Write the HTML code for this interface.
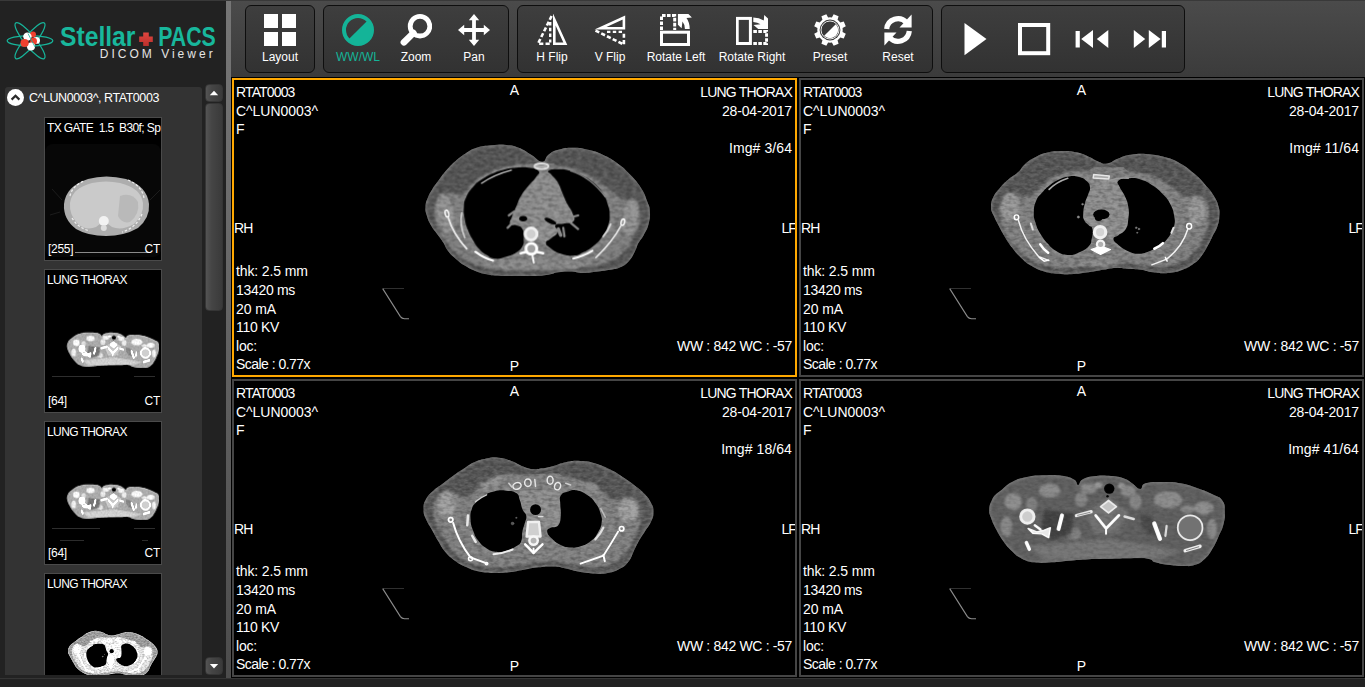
<!DOCTYPE html>
<html lang="en">
<head>
<meta charset="utf-8">
<title>Stellar PACS DICOM Viewer</title>
<style>
*{box-sizing:border-box;margin:0;padding:0}
html,body{width:1365px;height:687px;overflow:hidden;background:#242424}
body{position:relative;font-family:"Liberation Sans",sans-serif;color:#fff}
.abs{position:absolute}
/* sidebar */
#side{left:0;top:0;width:226px;height:678px;background:#222}
#split{left:226px;top:0;width:5px;height:678px;background:linear-gradient(180deg,#767676,#6c6c6c 30%,#4c4c4c)}
#spanel{left:5px;top:87px;width:197px;height:588px;background:#333;border-radius:3px 3px 0 0}
#shead{left:29px;top:90px;font-size:12.5px;line-height:17px;white-space:nowrap;letter-spacing:-0.45px;color:#fff}
.thumb{left:44px;width:118px;height:144px;background:#000;border:1px solid #4a4a4a;overflow:hidden}
.thumb .tt{position:absolute;left:2px;top:3px;font-size:12px;line-height:15px;white-space:pre;letter-spacing:-0.6px}
.thumb .tn{position:absolute;left:3px;bottom:3px;font-size:12px;line-height:15px;letter-spacing:-0.3px}
.thumb .tm{position:absolute;right:1px;bottom:3px;font-size:12px;line-height:15px;letter-spacing:-0.3px}
.sbtn{left:205px;width:18px;border:1px solid #353535;border-radius:4px;background:linear-gradient(90deg,#545454,#454545 35%,#3a3a3a)}
/* toolbar */
#tbar{left:231px;top:0;width:1134px;height:77px;background:linear-gradient(180deg,#4b4b4b 0,#4a4a4a 4px,#3b3b3b 100%)}
#topline{left:0;top:0;width:1365px;height:1px;background:#393939}
.grp{top:5px;height:68px;border:1px solid #0e0e0e;border-radius:6px;background:linear-gradient(180deg,#3e3e3e,#323232)}
.lbl{top:50px;font-size:12px;line-height:14px;white-space:nowrap;text-align:center;color:#fff;transform:translateX(-50%)}
.ico{top:14px;width:32px;height:32px}
/* viewports */
#grid{left:231px;top:77px;width:1134px;height:601px;background:#000}
.vp{background:#000;border:2px solid #454545;overflow:hidden}
.vp.sel{border-color:#ffa800}
.vp .t{position:absolute;font-size:14px;line-height:18.6px;white-space:nowrap;color:#fff}
#bot{left:0;top:678px;width:1365px;height:9px;background:#222;border-top:1px solid #343434}
</style>
</head>
<body>
<!-- SIDEBAR -->
<div id="side" class="abs"></div>
<div id="spanel" class="abs"></div>
<div id="shead" class="abs">C^LUN0003^, RTAT0003</div>
<svg class="abs" style="left:7px;top:89px" width="17" height="17" viewBox="0 0 17 17"><circle cx="8.5" cy="8.5" r="8.5" fill="#fff"/><path d="M4.6 10.6 L8.5 6.7 L12.4 10.6" fill="none" stroke="#2a2a2a" stroke-width="2.2"/></svg>

<!-- THUMBS -->
<div class="abs thumb" style="top:117px"><svg class="abs" style="left:0;top:0" width="116" height="142" viewBox="45 118 116 142">
<rect x="45" y="144" width="116" height="113" rx="8" fill="#070707"/>
<g filter="url(#tb)">
<path d="M64 204 Q66 186 88 179 Q106 174 126 179 Q147 186 149 204 Q150 218 138 228 Q124 236 106 236 Q88 236 76 229 Q63 219 64 204Z" fill="#adadad"/>
<path d="M70 203 Q72 188 92 183 Q106 180 120 183 Q141 188 143 203 Q144 215 134 224 Q122 231 112 227 L104 221 L96 227 Q86 231 78 224 Q69 215 70 203Z" fill="#cacaca"/>
<path d="M120 196 Q132 192 138 202 Q140 214 130 222 Q122 224 118 216Z" fill="#b9b9b9"/>
<circle cx="103.8" cy="221" r="5" fill="#f2f2f2"/>
<circle cx="103.8" cy="228" r="3" fill="#ddd"/>
<path d="M70 196 Q72 186 84 181 M128 180 Q142 186 144 198 M72 218 Q78 228 90 231 M142 214 Q136 228 122 232" stroke="#eee" stroke-width="1.3" fill="none" stroke-dasharray="2.5 2"/>
</g>
<path d="M52 189 L62 200 M150 200 L160 190 M50 215 L60 212" stroke="#1c1c1c" stroke-width="1"/>
<path d="M75 252.5 H148" stroke="#8a8a8a" stroke-width="1"/>
</svg><span class="tt">TX GATE  1.5  B30f; Sp</span><span class="tn">[255]</span><span class="tm">CT</span></div>
<div class="abs thumb" style="top:269px"><svg class="abs" style="left:0;top:0" width="116" height="142" viewBox="45 270 116 142">
<use href="#ct4g" transform="translate(59.5 314.8) scale(0.0966)" filter="url(#br)"/>
<path d="M52 376.5 H100 M134 376.5 H155" stroke="#2e2e2e" stroke-width="1"/>
</svg><span class="tt">LUNG THORAX</span><span class="tn">[64]</span><span class="tm">CT</span></div>
<div class="abs thumb" style="top:421px"><svg class="abs" style="left:0;top:0" width="116" height="142" viewBox="45 422 116 142">
<use href="#ct4g" transform="translate(59.5 466.8) scale(0.0966)" filter="url(#br)"/>
<path d="M52 528.5 H100 M134 528.5 H155" stroke="#2e2e2e" stroke-width="1"/><path d="M60 540.5 H84 M142 540.5 H148" stroke="#2c2c2c" stroke-width="1"/>
</svg><span class="tt">LUNG THORAX</span><span class="tn">[64]</span><span class="tm">CT</span></div>
<div class="abs thumb" style="top:573px;height:102px;border-bottom:0"><svg class="abs" style="left:0;top:0" width="116" height="102" viewBox="45 574 116 102">
<use href="#ct3g" transform="translate(58.9 620.2) scale(0.0963)" filter="url(#br)"/>
</svg><span class="tt">LUNG THORAX</span></div>
<!-- /THUMBS -->

<div class="abs sbtn" style="top:84px;height:18px"></div>
<div class="abs sbtn" style="top:103px;height:208px"></div>
<div class="abs sbtn" style="top:657px;height:18px"></div>
<svg class="abs" style="left:205px;top:84px" width="18" height="18"><path d="M4.8 11.3 L9 6.8 L13.2 11.3Z" fill="#fff"/></svg>
<svg class="abs" style="left:205px;top:657px" width="18" height="18"><path d="M4.8 7 L13.2 7 L9 11.5Z" fill="#fff"/></svg>

<!-- LOGO -->
<svg class="abs" style="left:0;top:10px" width="226" height="60" viewBox="0 10 226 60">
<defs><linearGradient id="rc" x1="0" y1="0" x2="0" y2="1"><stop offset="0" stop-color="#e2463f"/><stop offset="1" stop-color="#b8302d"/></linearGradient></defs>
<g fill="none" stroke="#17b49a" stroke-width="1.25">
<ellipse cx="30" cy="40.8" rx="22.8" ry="5.2"/>
<ellipse cx="30" cy="40.8" rx="22.8" ry="5.6" transform="rotate(51 30 40.8)"/>
<ellipse cx="30" cy="40.8" rx="22.8" ry="5.6" transform="rotate(-51 30 40.8)"/>
</g>
<circle cx="33" cy="34.6" r="3" fill="#f0402f"/>
<circle cx="27.4" cy="36.6" r="4.2" fill="#fff"/>
<circle cx="36.6" cy="40.4" r="3.4" fill="#fff"/>
<circle cx="33.6" cy="41.2" r="3.4" fill="#f0402f"/>
<circle cx="31" cy="46.4" r="4" fill="#fff"/>
<circle cx="24.6" cy="43" r="4.1" fill="#f0402f"/>
<path d="M28 33.5 L35 47" stroke="#17b49a" stroke-width="0.8" fill="none"/>
<text x="60" y="46.3" font-family="Liberation Sans, sans-serif" font-weight="bold" font-size="27" fill="#18b79c" textLength="75.4" lengthAdjust="spacingAndGlyphs">Stellar</text>
<text x="158.2" y="46.3" font-family="Liberation Sans, sans-serif" font-weight="bold" font-size="27" fill="#18b79c" textLength="57.6" lengthAdjust="spacingAndGlyphs">PACS</text>
<path d="M143.2 32.4 h5.6 v4 h4 v5.6 h-4 v4 h-5.6 v-4 h-4 v-5.6 h4z" fill="url(#rc)"/>
<text x="99.7" y="58.4" font-family="Liberation Sans, sans-serif" font-size="12" fill="#e4e4e4" textLength="113" lengthAdjust="spacing">DICOM Viewer</text>
</svg>
<div id="split" class="abs"></div>

<!-- TOOLBAR -->
<div id="tbar" class="abs"></div>
<div id="topline" class="abs"></div>
<div class="abs grp" style="left:245px;width:70px"></div>
<div class="abs grp" style="left:323px;width:186px"></div>
<div class="abs grp" style="left:517px;width:416px"></div>
<div class="abs grp" style="left:941px;width:244px"></div>

<div class="abs lbl" style="left:280px">Layout</div>
<div class="abs lbl" style="left:358px;color:#14b498">WW/WL</div>
<div class="abs lbl" style="left:416px">Zoom</div>
<div class="abs lbl" style="left:474px">Pan</div>
<div class="abs lbl" style="left:552px">H Flip</div>
<div class="abs lbl" style="left:610px">V Flip</div>
<div class="abs lbl" style="left:676px">Rotate Left</div>
<div class="abs lbl" style="left:752px">Rotate Right</div>
<div class="abs lbl" style="left:830px">Preset</div>
<div class="abs lbl" style="left:898px">Reset</div>

<!-- ICONS -->
<svg class="abs ico" style="left:264px" viewBox="0 0 32 32"><path d="M0 0h14v14H0zM18 0h14v14H18zM0 18h14v14H0zM18 18h14v14H18z" fill="#fff"/></svg>
<svg class="abs ico" style="left:342px" viewBox="0 0 32 32"><circle cx="16" cy="16" r="14" fill="none" stroke="#14b498" stroke-width="4"/><path d="M26.6 5.4 A15 15 0 0 1 5.4 26.6Z" fill="#14b498"/></svg>
<svg class="abs ico" style="left:400px" viewBox="0 0 32 32"><circle cx="20" cy="12.2" r="9.8" fill="none" stroke="#fff" stroke-width="4.8"/><path d="M13.4 19 L3.9 28.3" stroke="#fff" stroke-width="6.6" stroke-linecap="round"/></svg>
<svg class="abs ico" style="left:458px" viewBox="0 0 32 32"><path d="M16 0 L21.2 6.2 H17.9 V14.1 H25.8 V10.8 L32 16 L25.8 21.2 V17.9 H17.9 V25.8 H21.2 L16 32 L10.8 25.8 H14.1 V17.9 H6.2 V21.2 L0 16 L6.2 10.8 V14.1 H14.1 V6.2 H10.8Z" fill="#fff"/></svg>
<svg class="abs ico" style="left:536px" viewBox="0 0 32 32" fill="none" stroke="#fff"><path d="M18.3 5.5 V29.7 H29.3Z" stroke-width="2.6" stroke-miterlimit="12"/><path d="M15.6 2 L2 29.7 H15" stroke-width="2.6" stroke-dasharray="4.2 2.2"/><path d="M14.2 8 V28.4" stroke-width="2.4" stroke-dasharray="3.4 2.4"/></svg>
<svg class="abs ico" style="left:594px" viewBox="0 0 32 32" fill="none" stroke="#fff"><path d="M6.5 14.2 L29.9 3.6 V14.2Z" stroke-width="2.6" stroke-miterlimit="12"/><path d="M1.5 16.6 L29.9 30.6 V18" stroke-width="2.6" stroke-dasharray="4.2 2.2"/><path d="M13 17.8 H29" stroke-width="2.2" stroke-dasharray="3.4 2.4"/></svg>
<svg class="abs ico" style="left:660px" viewBox="0 0 32 32" fill="none" stroke="#fff"><rect x="1.5" y="18.2" width="27" height="12.3" stroke-width="3"/><path d="M1.5 16 V1.5 H14.7 V16" stroke-width="3" stroke-dasharray="3.6 1.4"/><path d="M17.9 0 L28.4 0 L31.9 3.5 L26.5 4 Q29.7 8.5 29.7 14.9 L24.9 14.9 Q24.9 10.5 22.5 7.5 L21.6 14.2 L17.9 10.7Z" fill="#fff" stroke="none"/></svg>
<svg class="abs ico" style="left:736px" viewBox="0 0 32 32" fill="none" stroke="#fff"><rect x="1.2" y="4.4" width="13.2" height="25.1" stroke-width="3"/><path d="M17.3 17.5 H30.6 V29.5 H17.3" stroke-width="3" stroke-dasharray="3.6 1.4"/><path d="M32 14.9 L32 4.4 L28.2 1.1 L27.8 6.5 Q23 3.5 17.3 3.5 L17.3 8.1 Q21.5 8.3 24.5 10.3 L17.5 11 L22.2 14.9Z" fill="#fff" stroke="none"/></svg>
<svg class="abs ico" style="left:814px" viewBox="0 0 32 32"><path d="M17.89 3.44 L19.66 0.22 L24.57 2.25 L23.55 5.78 A12.7 12.7 0 0 1 26.22 8.45 L29.75 7.43 L31.78 12.34 L28.56 14.11 A12.7 12.7 0 0 1 28.56 17.89 L31.78 19.66 L29.75 24.57 L26.22 23.55 A12.7 12.7 0 0 1 23.55 26.22 L24.57 29.75 L19.66 31.78 L17.89 28.56 A12.7 12.7 0 0 1 14.11 28.56 L12.34 31.78 L7.43 29.75 L8.45 26.22 A12.7 12.7 0 0 1 5.78 23.55 L2.25 24.57 L0.22 19.66 L3.44 17.89 A12.7 12.7 0 0 1 3.44 14.11 L0.22 12.34 L2.25 7.43 L5.78 8.45 A12.7 12.7 0 0 1 8.45 5.78 L7.43 2.25 L12.34 0.22 L14.11 3.44 A12.7 12.7 0 0 1 17.89 3.44Z" fill="#fff"/><circle cx="16" cy="16" r="10.4" fill="#373737"/><circle cx="16" cy="16" r="9" fill="none" stroke="#fff" stroke-width="0.9"/><path d="M21.8 10.2 A8.2 8.2 0 0 1 10.2 21.8Z" fill="#fff"/></svg>
<svg class="abs ico" style="left:884px;width:28px" viewBox="0 0 28 32" fill="none" stroke="#fff"><path d="M2.7 15 A11.3 11.3 0 0 1 22.5 8.6" stroke-width="5.2"/><path d="M15.5 13.6 L27.6 13.6 L27.6 0.5Z" fill="#fff" stroke="none"/><path d="M25.3 17 A11.3 11.3 0 0 1 5.5 23.4" stroke-width="5.2"/><path d="M12.5 18.4 L0.4 18.4 L0.4 31.5Z" fill="#fff" stroke="none"/></svg>
<svg class="abs" style="left:941px;top:5px" width="244" height="68" viewBox="941 5 244 68" fill="#fff"><path d="M964.5 23 V55.2 L986.5 39Z"/><rect x="1020" y="25" width="28.2" height="28.2" fill="none" stroke="#fff" stroke-width="4"/><path d="M1075.6 31 h4.2 v16.6 h-4.2z M1093 30 V48 L1081.2 39Z M1108.3 30 V48 L1096.8 39Z"/><path d="M1133.8 30 V48 L1145.2 39Z M1148.8 30 V48 L1160.6 39Z M1161.8 31 h4.2 v16.6 h-4.2z"/></svg>

<!-- VIEWPORTS -->
<div id="grid" class="abs"></div>
<div class="abs vp sel" style="left:232px;top:78px;width:565px;height:299px" id="vp1">
<div class="t" style="left:2px;top:3px"><div style="letter-spacing:-0.86px">RTAT0003</div><div style="letter-spacing:-0.04px">C^LUN0003^</div><div>F</div></div>
<div class="t" style="left:0;width:100%;top:1px;text-align:center">A</div>
<div class="t" style="right:3px;top:3px;text-align:right"><div style="letter-spacing:-0.84px">LUNG THORAX</div><div style="letter-spacing:-0.16px">28-04-2017</div><div>&nbsp;</div><div style="letter-spacing:0.08px">Img# 3/64</div></div>
<div class="t" style="left:0;top:139px;letter-spacing:-0.9px">RH</div>
<div class="t" style="right:0;top:139px;letter-spacing:-0.9px;margin-right:-1px">LF</div>
<div class="t" style="left:2px;bottom:1px"><div style="letter-spacing:-0.13px">thk: 2.5 mm</div><div style="letter-spacing:-0.31px">13420 ms</div><div style="letter-spacing:-0.09px">20 mA</div><div style="letter-spacing:-0.32px">110 KV</div><div style="letter-spacing:-0.20px">loc:</div><div style="letter-spacing:-0.53px">Scale : 0.77x</div></div>
<div class="t" style="right:3px;bottom:1px;text-align:right"><div style="letter-spacing:-0.33px">WW : 842 WC : -57</div><div>&nbsp;</div></div>
<div class="t" style="left:0;width:100%;bottom:-1px;text-align:center">P</div>
<svg class="abs" style="left:146px;top:206px" width="40" height="40" viewBox="0 0 40 40" fill="none"><path d="M2.7 2.5 H24" stroke="#303030" stroke-width="1"/><path d="M2.7 2.6 L20.4 30.6 Q21.8 32.6 24.5 32.7 H29" stroke="#8c8c8c" stroke-width="1.1"/></svg>
</div>
<div class="abs vp" style="left:799px;top:78px;width:565px;height:299px" id="vp2">
<div class="t" style="left:2px;top:3px"><div style="letter-spacing:-0.86px">RTAT0003</div><div style="letter-spacing:-0.04px">C^LUN0003^</div><div>F</div></div>
<div class="t" style="left:0;width:100%;top:1px;text-align:center">A</div>
<div class="t" style="right:3px;top:3px;text-align:right"><div style="letter-spacing:-0.84px">LUNG THORAX</div><div style="letter-spacing:-0.16px">28-04-2017</div><div>&nbsp;</div><div style="letter-spacing:0.08px">Img# 11/64</div></div>
<div class="t" style="left:0;top:139px;letter-spacing:-0.9px">RH</div>
<div class="t" style="right:0;top:139px;letter-spacing:-0.9px;margin-right:-1px">LF</div>
<div class="t" style="left:2px;bottom:1px"><div style="letter-spacing:-0.13px">thk: 2.5 mm</div><div style="letter-spacing:-0.31px">13420 ms</div><div style="letter-spacing:-0.09px">20 mA</div><div style="letter-spacing:-0.32px">110 KV</div><div style="letter-spacing:-0.20px">loc:</div><div style="letter-spacing:-0.53px">Scale : 0.77x</div></div>
<div class="t" style="right:3px;bottom:1px;text-align:right"><div style="letter-spacing:-0.33px">WW : 842 WC : -57</div><div>&nbsp;</div></div>
<div class="t" style="left:0;width:100%;bottom:-1px;text-align:center">P</div>
<svg class="abs" style="left:146px;top:206px" width="40" height="40" viewBox="0 0 40 40" fill="none"><path d="M2.7 2.5 H24" stroke="#303030" stroke-width="1"/><path d="M2.7 2.6 L20.4 30.6 Q21.8 32.6 24.5 32.7 H29" stroke="#8c8c8c" stroke-width="1.1"/></svg>
</div>
<div class="abs vp" style="left:232px;top:379px;width:565px;height:298px" id="vp3">
<div class="t" style="left:2px;top:3px"><div style="letter-spacing:-0.86px">RTAT0003</div><div style="letter-spacing:-0.04px">C^LUN0003^</div><div>F</div></div>
<div class="t" style="left:0;width:100%;top:1px;text-align:center">A</div>
<div class="t" style="right:3px;top:3px;text-align:right"><div style="letter-spacing:-0.84px">LUNG THORAX</div><div style="letter-spacing:-0.16px">28-04-2017</div><div>&nbsp;</div><div style="letter-spacing:0.08px">Img# 18/64</div></div>
<div class="t" style="left:0;top:139px;letter-spacing:-0.9px">RH</div>
<div class="t" style="right:0;top:139px;letter-spacing:-0.9px;margin-right:-1px">LF</div>
<div class="t" style="left:2px;bottom:1px"><div style="letter-spacing:-0.13px">thk: 2.5 mm</div><div style="letter-spacing:-0.31px">13420 ms</div><div style="letter-spacing:-0.09px">20 mA</div><div style="letter-spacing:-0.32px">110 KV</div><div style="letter-spacing:-0.20px">loc:</div><div style="letter-spacing:-0.53px">Scale : 0.77x</div></div>
<div class="t" style="right:3px;bottom:1px;text-align:right"><div style="letter-spacing:-0.33px">WW : 842 WC : -57</div><div>&nbsp;</div></div>
<div class="t" style="left:0;width:100%;bottom:-1px;text-align:center">P</div>
<svg class="abs" style="left:146px;top:205px" width="40" height="40" viewBox="0 0 40 40" fill="none"><path d="M2.7 2.5 H24" stroke="#303030" stroke-width="1"/><path d="M2.7 2.6 L20.4 30.6 Q21.8 32.6 24.5 32.7 H29" stroke="#8c8c8c" stroke-width="1.1"/></svg>
</div>
<div class="abs vp" style="left:799px;top:379px;width:565px;height:298px" id="vp4">
<div class="t" style="left:2px;top:3px"><div style="letter-spacing:-0.86px">RTAT0003</div><div style="letter-spacing:-0.04px">C^LUN0003^</div><div>F</div></div>
<div class="t" style="left:0;width:100%;top:1px;text-align:center">A</div>
<div class="t" style="right:3px;top:3px;text-align:right"><div style="letter-spacing:-0.84px">LUNG THORAX</div><div style="letter-spacing:-0.16px">28-04-2017</div><div>&nbsp;</div><div style="letter-spacing:0.08px">Img# 41/64</div></div>
<div class="t" style="left:0;top:139px;letter-spacing:-0.9px">RH</div>
<div class="t" style="right:0;top:139px;letter-spacing:-0.9px;margin-right:-1px">LF</div>
<div class="t" style="left:2px;bottom:1px"><div style="letter-spacing:-0.13px">thk: 2.5 mm</div><div style="letter-spacing:-0.31px">13420 ms</div><div style="letter-spacing:-0.09px">20 mA</div><div style="letter-spacing:-0.32px">110 KV</div><div style="letter-spacing:-0.20px">loc:</div><div style="letter-spacing:-0.53px">Scale : 0.77x</div></div>
<div class="t" style="right:3px;bottom:1px;text-align:right"><div style="letter-spacing:-0.33px">WW : 842 WC : -57</div><div>&nbsp;</div></div>
<div class="t" style="left:0;width:100%;bottom:-1px;text-align:center">P</div>
<svg class="abs" style="left:146px;top:205px" width="40" height="40" viewBox="0 0 40 40" fill="none"><path d="M2.7 2.5 H24" stroke="#303030" stroke-width="1"/><path d="M2.7 2.6 L20.4 30.6 Q21.8 32.6 24.5 32.7 H29" stroke="#8c8c8c" stroke-width="1.1"/></svg>
</div>

<!-- CTDEFS -->
<svg class="abs" width="0" height="0" style="left:0;top:0">
<defs>
<filter id="b1" x="-10%" y="-10%" width="120%" height="120%"><feGaussianBlur stdDeviation="2.2"/></filter>
<filter id="b2" x="-10%" y="-10%" width="120%" height="120%"><feGaussianBlur stdDeviation="3.5"/></filter>
<filter id="b3" x="-20%" y="-20%" width="140%" height="140%"><feGaussianBlur stdDeviation="7"/></filter>
<filter id="b0" x="-10%" y="-10%" width="120%" height="120%"><feGaussianBlur stdDeviation="1.4"/></filter>
<filter id="nz" x="0" y="0" width="100%" height="100%"><feTurbulence type="fractalNoise" baseFrequency="0.05 0.09" numOctaves="2" seed="7" result="n"/><feColorMatrix in="n" type="matrix" values="0 0 0 0 1  0 0 0 0 1  0 0 0 0 1  1.6 0 0 0 -0.62"/><feComposite in2="SourceGraphic" operator="in"/></filter>
<filter id="nzd" x="0" y="0" width="100%" height="100%"><feTurbulence type="fractalNoise" baseFrequency="0.045 0.08" numOctaves="2" seed="23" result="n"/><feColorMatrix in="n" type="matrix" values="0 0 0 0 0  0 0 0 0 0  0 0 0 0 0  1.8 0 0 0 -0.72"/><feComposite in2="SourceGraphic" operator="in"/></filter>
<filter id="tb" x="-10%" y="-10%" width="120%" height="120%"><feGaussianBlur stdDeviation="0.5"/></filter>
<filter id="br" x="0" y="0" width="100%" height="100%" color-interpolation-filters="sRGB"><feComponentTransfer><feFuncR type="linear" slope="1.82"/><feFuncG type="linear" slope="1.82"/><feFuncB type="linear" slope="1.82"/></feComponentTransfer></filter>
</defs>
</svg>
<!-- /CTDEFS -->
<!-- CT1 -->
<svg class="abs ct" style="left:400px;top:130px" width="280" height="170" viewBox="0 0 1132 687">
<g id="ct1g">
<clipPath id="cp1"><path d="M575 128 C593 128 584 112 600 100 C616 88 615 87 640 80 C665 73 670 72 700 72 C730 72 730 73 760 80 C790 87 790 86 820 100 C850 114 852 115 880 135 C908 155 906 155 930 180 C954 205 957 207 975 235 C993 263 991 266 1000 290 C1009 314 1009 307 1010 330 C1011 353 1011 356 1005 380 C999 404 995 406 985 425 C975 444 974 439 965 455 C956 471 960 471 950 490 C940 509 940 514 925 530 C910 546 909 546 890 555 C871 564 873 561 850 565 C827 569 828 569 800 572 C772 575 768 578 740 578 C712 578 715 573 690 572 C665 571 663 572 640 575 C617 578 625 581 600 585 C575 589 570 589 540 590 C510 591 510 590 480 590 C450 590 450 591 420 590 C390 589 388 590 360 585 C332 580 334 581 310 572 C286 563 286 563 265 550 C244 537 243 535 225 520 C207 505 208 506 195 490 C182 474 186 473 175 455 C164 437 163 438 150 420 C137 402 136 404 125 385 C114 366 114 364 108 345 C102 326 102 328 103 310 C104 292 105 293 112 275 C119 257 119 258 130 240 C141 222 140 225 155 205 C170 185 172 180 190 160 C208 140 206 141 225 125 C244 109 244 108 265 95 C286 82 284 80 310 72 C336 64 340 65 370 62 C400 59 402 57 430 60 C458 63 455 62 480 72 C505 82 506 86 530 100 C554 114 557 128 575 128Z"/></clipPath>
<g filter="url(#b1)"><path id="c1body" d="M575 128 C593 128 584 112 600 100 C616 88 615 87 640 80 C665 73 670 72 700 72 C730 72 730 73 760 80 C790 87 790 86 820 100 C850 114 852 115 880 135 C908 155 906 155 930 180 C954 205 957 207 975 235 C993 263 991 266 1000 290 C1009 314 1009 307 1010 330 C1011 353 1011 356 1005 380 C999 404 995 406 985 425 C975 444 974 439 965 455 C956 471 960 471 950 490 C940 509 940 514 925 530 C910 546 909 546 890 555 C871 564 873 561 850 565 C827 569 828 569 800 572 C772 575 768 578 740 578 C712 578 715 573 690 572 C665 571 663 572 640 575 C617 578 625 581 600 585 C575 589 570 589 540 590 C510 591 510 590 480 590 C450 590 450 591 420 590 C390 589 388 590 360 585 C332 580 334 581 310 572 C286 563 286 563 265 550 C244 537 243 535 225 520 C207 505 208 506 195 490 C182 474 186 473 175 455 C164 437 163 438 150 420 C137 402 136 404 125 385 C114 366 114 364 108 345 C102 326 102 328 103 310 C104 292 105 293 112 275 C119 257 119 258 130 240 C141 222 140 225 155 205 C170 185 172 180 190 160 C208 140 206 141 225 125 C244 109 244 108 265 95 C286 82 284 80 310 72 C336 64 340 65 370 62 C400 59 402 57 430 60 C458 63 455 62 480 72 C505 82 506 86 530 100 C554 114 557 128 575 128Z" fill="#565656"/></g>
<g clip-path="url(#cp1)">
<path d="M575 128 C593 128 584 112 600 100 C616 88 615 87 640 80 C665 73 670 72 700 72 C730 72 730 73 760 80 C790 87 790 86 820 100 C850 114 852 115 880 135 C908 155 906 155 930 180 C954 205 957 207 975 235 C993 263 991 266 1000 290 C1009 314 1009 307 1010 330 C1011 353 1011 356 1005 380 C999 404 995 406 985 425 C975 444 974 439 965 455 C956 471 960 471 950 490 C940 509 940 514 925 530 C910 546 909 546 890 555 C871 564 873 561 850 565 C827 569 828 569 800 572 C772 575 768 578 740 578 C712 578 715 573 690 572 C665 571 663 572 640 575 C617 578 625 581 600 585 C575 589 570 589 540 590 C510 591 510 590 480 590 C450 590 450 591 420 590 C390 589 388 590 360 585 C332 580 334 581 310 572 C286 563 286 563 265 550 C244 537 243 535 225 520 C207 505 208 506 195 490 C182 474 186 473 175 455 C164 437 163 438 150 420 C137 402 136 404 125 385 C114 366 114 364 108 345 C102 326 102 328 103 310 C104 292 105 293 112 275 C119 257 119 258 130 240 C141 222 140 225 155 205 C170 185 172 180 190 160 C208 140 206 141 225 125 C244 109 244 108 265 95 C286 82 284 80 310 72 C336 64 340 65 370 62 C400 59 402 57 430 60 C458 63 455 62 480 72 C505 82 506 86 530 100 C554 114 557 128 575 128Z" fill="none" stroke="#7c7c7c" stroke-width="12" filter="url(#b2)" opacity=".85"/>
<path d="M575 150 C535 147 536 140 500 140 C464 140 465 141 430 150 C395 159 393 159 360 175 C327 191 328 194 300 215 C272 236 275 250 250 260 C225 270 225 247 200 255 C175 263 165 269 150 290 C135 311 139 312 140 340 C141 368 144 372 155 400 C166 428 167 426 185 450 C203 474 202 475 225 495 C248 515 246 515 275 530 C304 545 304 546 340 555 C376 564 380 562 420 565 C460 568 460 568 500 568 C540 568 540 567 580 565 C620 563 620 563 660 560 C700 557 702 559 740 555 C778 551 777 554 810 545 C843 536 844 536 870 520 C896 504 896 503 915 480 C934 457 932 455 945 430 C958 405 961 405 968 380 C975 355 977 354 972 330 C967 306 968 298 950 285 C932 272 923 289 900 280 C877 271 885 269 860 250 C835 231 833 225 800 205 C767 185 765 184 730 170 C695 156 699 155 660 150 C621 145 615 153 575 150Z" fill="#808080" filter="url(#b2)"/>
<g filter="url(#b2)">
<ellipse cx="182" cy="335" rx="34" ry="80" fill="#949494" transform="rotate(-8 182 335)"/>
<ellipse cx="932" cy="350" rx="32" ry="72" fill="#949494" transform="rotate(8 932 350)"/>
<path d="M330 545 L480 518 L600 518 L780 538 L700 562 L420 566Z" fill="#8a8a8a"/>
</g>
<g filter="url(#b2)" fill="#8a8a8a" stroke="#8a8a8a" stroke-width="18" stroke-linejoin="round" opacity=".85">
<path d="M300 225 C316 207 311 213 330 200 C349 187 352 185 375 175 C398 165 396 166 420 160 C444 154 445 154 470 152 C495 150 497 149 520 152 C543 155 552 155 560 165 C568 175 560 175 550 190 C540 205 535 206 520 225 C505 244 503 244 490 265 C477 286 479 290 470 310 C461 330 461 327 455 345 C449 363 441 370 445 380 C449 390 457 380 470 385 C483 390 487 386 495 400 C503 414 500 422 500 440 C500 458 503 456 495 470 C487 484 486 484 470 495 C454 506 451 506 430 512 C409 518 405 522 385 520 C365 518 366 515 350 505 C334 495 334 495 320 480 C306 465 306 464 295 445 C284 426 283 426 275 405 C267 384 266 383 262 360 C258 337 256 338 258 315 C260 292 257 293 268 270 C279 247 284 243 300 225Z"/>
<path d="M600 165 C607 159 617 158 640 158 C663 158 665 158 690 165 C715 172 716 172 740 185 C764 198 765 197 785 215 C805 233 806 234 820 255 C834 276 833 277 840 300 C847 323 848 322 848 345 C848 368 848 367 840 390 C832 413 830 415 815 435 C800 455 799 455 780 470 C761 485 760 485 740 495 C720 505 723 507 700 508 C677 509 673 508 650 500 C627 492 625 489 610 478 C595 467 589 465 590 455 C591 445 600 448 612 437 C624 426 634 425 638 412 C642 399 622 394 628 385 C634 376 641 382 660 378 C679 374 693 379 702 368 C711 357 703 352 697 335 C691 318 687 320 677 300 C667 280 667 278 657 255 C647 232 648 229 637 210 C626 191 621 191 612 180 C603 169 593 171 600 165Z"/>
</g>
</g>
<g filter="url(#b1)"><path d="M575 160 C591 153 586 158 600 172 C614 186 617 192 632 215 C647 238 646 241 658 265 C670 289 667 290 678 310 C689 330 696 330 702 345 C708 360 713 361 702 370 C691 379 676 372 660 380 C644 388 648 389 640 402 C632 415 641 419 628 432 C615 445 607 455 590 455 C573 455 575 448 560 432 C545 416 545 407 530 392 C515 377 515 376 500 372 C485 368 483 378 470 378 C457 378 451 383 448 372 C445 361 450 356 458 335 C466 314 467 313 478 290 C489 267 488 268 503 245 C518 222 520 219 538 198 C556 177 559 167 575 160Z" fill="#8e8e8e" stroke="#8e8e8e" stroke-width="8" stroke-linejoin="round"/><circle cx="598" cy="420" r="33" fill="#949494"/>
<path d="M505 150 L560 165 L600 165 L650 150 L620 135 L530 135Z" fill="#7a7a7a"/></g>
<use href="#c1body" filter="url(#nz)" opacity="0.16"/>
<use href="#c1body" filter="url(#nzd)" opacity="0.3"/>
<g filter="url(#b1)" fill="#000">
<path d="M300 225 C316 207 311 213 330 200 C349 187 352 185 375 175 C398 165 396 166 420 160 C444 154 445 154 470 152 C495 150 497 149 520 152 C543 155 552 155 560 165 C568 175 560 175 550 190 C540 205 535 206 520 225 C505 244 503 244 490 265 C477 286 479 290 470 310 C461 330 461 327 455 345 C449 363 441 370 445 380 C449 390 457 380 470 385 C483 390 487 386 495 400 C503 414 500 422 500 440 C500 458 503 456 495 470 C487 484 486 484 470 495 C454 506 451 506 430 512 C409 518 405 522 385 520 C365 518 366 515 350 505 C334 495 334 495 320 480 C306 465 306 464 295 445 C284 426 283 426 275 405 C267 384 266 383 262 360 C258 337 256 338 258 315 C260 292 257 293 268 270 C279 247 284 243 300 225Z"/>
<path d="M600 165 C607 159 617 158 640 158 C663 158 665 158 690 165 C715 172 716 172 740 185 C764 198 765 197 785 215 C805 233 806 234 820 255 C834 276 833 277 840 300 C847 323 848 322 848 345 C848 368 848 367 840 390 C832 413 830 415 815 435 C800 455 799 455 780 470 C761 485 760 485 740 495 C720 505 723 507 700 508 C677 509 673 508 650 500 C627 492 625 489 610 478 C595 467 589 465 590 455 C591 445 600 448 612 437 C624 426 634 425 638 412 C642 399 622 394 628 385 C634 376 641 382 660 378 C679 374 693 379 702 368 C711 357 703 352 697 335 C691 318 687 320 677 300 C667 280 667 278 657 255 C647 232 648 229 637 210 C626 191 621 191 612 180 C603 169 593 171 600 165Z"/>
<ellipse cx="498" cy="358" rx="16" ry="11"/>
<ellipse cx="608" cy="368" rx="26" ry="9" transform="rotate(25 608 368)"/>
</g>
<g filter="url(#b1)" fill="none" stroke="#8a8a8a" stroke-linecap="round"><path d="M460 330 L440 345 M455 375 L435 395 M700 350 L720 345 M690 375 L720 400 M660 395 L665 430" stroke-width="9"/>
<path d="M640 400 L650 425" stroke-width="14"/></g>
<g filter="url(#b0)" fill="none" stroke="#fff" stroke-linecap="round"><ellipse cx="572" cy="146" rx="28" ry="11" stroke="#e0e0e0" stroke-width="8"/>
<path d="M552 147 H592" stroke="#bdbdbd" stroke-width="6"/>
<circle cx="530" cy="420" r="24" fill="#cfcfcf" stroke="#f0f0f0" stroke-width="12"/>
<circle cx="531" cy="480" r="22" fill="#a0a0a0" stroke="#fff" stroke-width="12"/>
<path d="M488 498 L512 492 M550 492 L578 498" stroke-width="11"/>
<path d="M536 510 L541 536" stroke-width="8"/>
<ellipse cx="190" cy="338" rx="7" ry="14" stroke-width="6" transform="rotate(-15 190 338)"/>
<path d="M196 356 Q215 420 270 480" stroke-width="7" stroke="#f2f2f2"/>
<path d="M250 335 Q240 380 262 435" stroke-width="7" stroke="#d0d0d0"/>
<path d="M305 492 Q340 518 376 528" stroke-width="9"/>
<path d="M330 215 Q380 180 450 162" stroke-width="6" stroke="#a8a8a8"/>
<ellipse cx="901" cy="373" rx="7" ry="13" stroke-width="6" transform="rotate(15 901 373)"/>
<path d="M893 388 Q860 450 792 516" stroke-width="6" stroke="#f2f2f2"/>
<path d="M852 380 Q840 410 822 430" stroke-width="7" stroke="#dcdcdc"/>
<path d="M700 520 Q745 508 778 488" stroke-width="8"/>
<path d="M690 165 Q770 190 830 270" stroke-width="5" stroke="#999"/></g>
</g>
</svg>
<!-- /CT1 -->
<!-- CT2 -->
<svg class="abs ct" style="left:970px;top:130px" width="280" height="170" viewBox="0 0 1132 687">
<g id="ct2g">
<clipPath id="cp2"><path d="M555 135 C575 132 576 124 600 115 C624 106 620 104 650 100 C680 96 685 95 720 98 C755 101 757 101 790 110 C823 119 821 119 850 135 C879 151 880 154 905 175 C930 196 930 197 950 220 C970 243 971 242 985 265 C999 288 999 289 1005 310 C1011 331 1009 330 1008 350 C1007 370 1007 370 1000 390 C993 410 990 410 980 430 C970 450 971 450 960 470 C949 490 949 492 935 510 C921 528 924 526 905 540 C886 554 886 555 860 565 C834 575 830 575 800 578 C770 581 768 578 740 575 C712 572 715 568 690 565 C665 562 665 564 640 562 C615 560 615 557 590 558 C565 559 568 561 540 565 C512 569 510 571 480 575 C450 579 450 580 420 582 C390 584 390 585 360 582 C330 579 328 580 300 572 C272 564 274 564 250 550 C226 536 225 534 205 515 C185 496 186 496 170 475 C154 454 154 453 140 430 C126 407 126 406 115 385 C104 364 103 364 95 345 C87 326 85 329 85 310 C85 291 86 289 95 270 C104 251 105 253 120 235 C135 217 136 216 155 200 C174 184 179 185 195 170 C211 155 204 155 220 140 C236 125 237 124 260 112 C283 100 282 99 310 92 C338 85 340 86 370 85 C400 84 402 84 430 90 C458 96 457 98 480 108 C503 118 501 121 520 128 C539 135 535 138 555 135Z"/></clipPath>
<g filter="url(#b1)"><path id="c2body" d="M555 135 C575 132 576 124 600 115 C624 106 620 104 650 100 C680 96 685 95 720 98 C755 101 757 101 790 110 C823 119 821 119 850 135 C879 151 880 154 905 175 C930 196 930 197 950 220 C970 243 971 242 985 265 C999 288 999 289 1005 310 C1011 331 1009 330 1008 350 C1007 370 1007 370 1000 390 C993 410 990 410 980 430 C970 450 971 450 960 470 C949 490 949 492 935 510 C921 528 924 526 905 540 C886 554 886 555 860 565 C834 575 830 575 800 578 C770 581 768 578 740 575 C712 572 715 568 690 565 C665 562 665 564 640 562 C615 560 615 557 590 558 C565 559 568 561 540 565 C512 569 510 571 480 575 C450 579 450 580 420 582 C390 584 390 585 360 582 C330 579 328 580 300 572 C272 564 274 564 250 550 C226 536 225 534 205 515 C185 496 186 496 170 475 C154 454 154 453 140 430 C126 407 126 406 115 385 C104 364 103 364 95 345 C87 326 85 329 85 310 C85 291 86 289 95 270 C104 251 105 253 120 235 C135 217 136 216 155 200 C174 184 179 185 195 170 C211 155 204 155 220 140 C236 125 237 124 260 112 C283 100 282 99 310 92 C338 85 340 86 370 85 C400 84 402 84 430 90 C458 96 457 98 480 108 C503 118 501 121 520 128 C539 135 535 138 555 135Z" fill="#565656"/></g>
<g clip-path="url(#cp2)">
<path d="M555 135 C575 132 576 124 600 115 C624 106 620 104 650 100 C680 96 685 95 720 98 C755 101 757 101 790 110 C823 119 821 119 850 135 C879 151 880 154 905 175 C930 196 930 197 950 220 C970 243 971 242 985 265 C999 288 999 289 1005 310 C1011 331 1009 330 1008 350 C1007 370 1007 370 1000 390 C993 410 990 410 980 430 C970 450 971 450 960 470 C949 490 949 492 935 510 C921 528 924 526 905 540 C886 554 886 555 860 565 C834 575 830 575 800 578 C770 581 768 578 740 575 C712 572 715 568 690 565 C665 562 665 564 640 562 C615 560 615 557 590 558 C565 559 568 561 540 565 C512 569 510 571 480 575 C450 579 450 580 420 582 C390 584 390 585 360 582 C330 579 328 580 300 572 C272 564 274 564 250 550 C226 536 225 534 205 515 C185 496 186 496 170 475 C154 454 154 453 140 430 C126 407 126 406 115 385 C104 364 103 364 95 345 C87 326 85 329 85 310 C85 291 86 289 95 270 C104 251 105 253 120 235 C135 217 136 216 155 200 C174 184 179 185 195 170 C211 155 204 155 220 140 C236 125 237 124 260 112 C283 100 282 99 310 92 C338 85 340 86 370 85 C400 84 402 84 430 90 C458 96 457 98 480 108 C503 118 501 121 520 128 C539 135 535 138 555 135Z" fill="none" stroke="#7c7c7c" stroke-width="12" filter="url(#b2)" opacity=".85"/>
<path d="M555 170 C525 169 519 165 480 165 C441 165 438 162 400 170 C362 178 360 179 330 195 C300 211 305 216 280 235 C255 254 258 265 230 270 C202 275 195 250 170 255 C145 260 143 269 130 290 C117 311 119 312 120 340 C121 368 124 372 135 400 C146 428 147 426 165 450 C183 474 182 475 205 495 C228 515 229 516 255 530 C281 544 279 543 310 550 C341 557 345 557 380 558 C415 559 415 557 450 552 C485 547 485 544 520 540 C555 536 557 535 590 535 C623 535 617 536 650 540 C683 544 685 547 720 550 C755 553 757 556 790 552 C823 548 824 547 850 535 C876 523 875 524 895 505 C915 486 915 484 930 460 C945 436 945 438 955 410 C965 382 966 378 968 350 C970 322 972 321 962 300 C952 279 951 273 930 265 C909 257 905 276 880 270 C855 264 855 256 830 240 C805 224 808 220 780 205 C752 190 753 189 720 180 C687 171 680 173 650 170 C620 167 624 168 600 168 C576 168 585 171 555 170Z" fill="#808080" filter="url(#b2)"/>
<g filter="url(#b2)">
<ellipse cx="163" cy="312" rx="36" ry="58" fill="#989898"/>
<ellipse cx="916" cy="328" rx="33" ry="58" fill="#989898"/>
<path d="M420 548 L520 518 L640 535 L540 555Z" fill="#8a8a8a"/>
</g>
<g filter="url(#b2)" fill="#8a8a8a" stroke="#8a8a8a" stroke-width="18" stroke-linejoin="round" opacity=".85">
<path d="M290 255 C303 240 302 239 320 225 C338 211 340 209 360 200 C380 191 380 191 400 188 C420 185 422 186 440 190 C458 194 459 195 470 205 C481 215 483 216 485 230 C487 244 483 244 478 260 C473 276 470 276 465 295 C460 314 459 317 458 335 C457 353 456 352 462 365 C468 378 472 376 480 385 C488 394 492 386 495 400 C498 414 496 422 492 440 C488 458 493 456 480 470 C467 484 461 486 440 495 C419 504 418 506 395 505 C372 504 370 501 350 490 C330 479 331 478 315 460 C299 442 298 441 285 420 C272 399 272 398 265 375 C258 352 257 353 258 330 C259 307 260 304 268 285 C276 266 277 270 290 255Z"/>
<path d="M600 205 C609 196 617 196 640 195 C663 194 665 192 690 200 C715 208 717 210 740 225 C763 240 762 241 780 260 C798 279 799 279 810 300 C821 321 821 322 825 345 C829 368 830 369 825 390 C820 411 819 411 805 430 C791 449 790 450 770 465 C750 480 748 481 725 490 C702 499 701 500 680 500 C659 500 660 499 640 490 C620 481 615 478 600 465 C585 452 580 450 580 440 C580 430 587 435 600 425 C613 415 620 416 630 400 C640 384 637 383 640 360 C643 337 644 334 640 310 C636 286 634 285 625 265 C616 245 611 245 605 230 C599 215 591 214 600 205Z"/>
</g>
</g>
<g filter="url(#b1)"><path d="M485 215 C495 201 496 204 520 200 C544 196 559 192 580 200 C601 208 594 214 605 230 C616 246 616 245 625 265 C634 285 636 286 640 310 C644 334 643 337 640 360 C637 383 640 384 630 400 C620 416 614 415 600 425 C586 435 585 441 575 440 C565 439 569 434 560 420 C551 406 555 394 540 385 C525 376 518 388 500 385 C482 382 480 388 470 375 C460 362 461 355 460 335 C459 315 463 315 468 295 C473 275 476 275 480 255 C484 235 475 229 485 215Z" fill="#8e8e8e" stroke="#8e8e8e" stroke-width="8" stroke-linejoin="round"/><path d="M470 170 L520 195 L590 200 L650 175 L620 150 L500 150Z" fill="#7c7c7c"/></g>
<use href="#c2body" filter="url(#nz)" opacity="0.16"/>
<use href="#c2body" filter="url(#nzd)" opacity="0.3"/>
<g filter="url(#b1)" fill="#000">
<path d="M290 255 C303 240 302 239 320 225 C338 211 340 209 360 200 C380 191 380 191 400 188 C420 185 422 186 440 190 C458 194 459 195 470 205 C481 215 483 216 485 230 C487 244 483 244 478 260 C473 276 470 276 465 295 C460 314 459 317 458 335 C457 353 456 352 462 365 C468 378 472 376 480 385 C488 394 492 386 495 400 C498 414 496 422 492 440 C488 458 493 456 480 470 C467 484 461 486 440 495 C419 504 418 506 395 505 C372 504 370 501 350 490 C330 479 331 478 315 460 C299 442 298 441 285 420 C272 399 272 398 265 375 C258 352 257 353 258 330 C259 307 260 304 268 285 C276 266 277 270 290 255Z"/>
<path d="M600 205 C609 196 617 196 640 195 C663 194 665 192 690 200 C715 208 717 210 740 225 C763 240 762 241 780 260 C798 279 799 279 810 300 C821 321 821 322 825 345 C829 368 830 369 825 390 C820 411 819 411 805 430 C791 449 790 450 770 465 C750 480 748 481 725 490 C702 499 701 500 680 500 C659 500 660 499 640 490 C620 481 615 478 600 465 C585 452 580 450 580 440 C580 430 587 435 600 425 C613 415 620 416 630 400 C640 384 637 383 640 360 C643 337 644 334 640 310 C636 286 634 285 625 265 C616 245 611 245 605 230 C599 215 591 214 600 205Z"/>
<ellipse cx="531" cy="341" rx="33" ry="20"/><circle cx="520" cy="352" r="16"/>
</g>
<g filter="url(#b1)" fill="none" stroke="#8a8a8a" stroke-linecap="round"><circle cx="438" cy="352" r="5" fill="#8a8a8a"/><circle cx="455" cy="300" r="4" fill="#8a8a8a"/><circle cx="672" cy="395" r="4" fill="#777"/><circle cx="683" cy="400" r="4" fill="#777"/><circle cx="676" cy="415" r="3" fill="#777"/></g>
<g filter="url(#b0)" fill="none" stroke="#fff" stroke-linecap="round"><path d="M500 180 L563 186 L561 198 L498 194Z" stroke="#e6e6e6" stroke-width="6" fill="#aaa" stroke-linejoin="round"/>
<circle cx="526" cy="413" r="23" fill="#d4d4d4" stroke="#f0f0f0" stroke-width="13"/>
<circle cx="528" cy="462" r="15" fill="#b0b0b0" stroke="#f4f4f4" stroke-width="9"/>
<path d="M490 483 L528 503 L568 483 L545 475 L512 475Z" fill="#fff" stroke-width="5" stroke-linejoin="round"/>
<ellipse cx="188" cy="353" rx="9" ry="10" stroke-width="6"/>
<path d="M196 366 Q215 440 278 512 L318 527" stroke-width="6" stroke="#f2f2f2"/>
<path d="M280 515 L300 530 L318 526" stroke-width="6"/>
<path d="M246 378 L254 402" stroke-width="8" stroke="#ddd"/>
<path d="M284 462 Q297 483 316 496" stroke-width="10"/>
<path d="M320 240 Q350 210 395 195" stroke-width="7" stroke="#aaa"/>
<ellipse cx="886" cy="389" rx="10" ry="11" stroke-width="6"/>
<path d="M880 402 Q860 470 795 522 L735 545" stroke-width="6" stroke="#f2f2f2"/>
<path d="M790 515 L797 530" stroke-width="6"/>
<path d="M823 395 L814 416" stroke-width="8" stroke="#ddd"/>
<path d="M745 480 Q765 472 780 457" stroke-width="10"/>
<path d="M560 205 Q600 190 640 195" stroke-width="6" stroke="#9a9a9a"/></g>
</g>
</svg>
<!-- /CT2 -->
<!-- CT3 -->
<svg class="abs ct" style="left:400px;top:430px" width="280" height="170" viewBox="0 0 1132 687">
<g id="ct3g">
<clipPath id="cp3"><path d="M575 155 C595 152 596 151 620 145 C644 139 642 135 670 130 C698 125 700 124 730 125 C760 126 760 126 790 135 C820 144 822 146 850 160 C878 174 875 174 900 190 C925 206 927 207 950 225 C973 243 974 242 990 260 C1006 278 1006 277 1015 295 C1024 313 1025 311 1025 330 C1025 349 1024 350 1015 370 C1006 390 1003 390 990 410 C977 430 976 430 965 450 C954 470 955 470 945 490 C935 510 939 512 925 530 C911 548 911 548 890 560 C869 572 868 573 840 578 C812 583 810 582 780 580 C750 578 748 577 720 572 C692 567 695 565 670 560 C645 555 648 553 620 552 C592 551 590 552 560 555 C530 558 530 560 500 565 C470 570 470 572 440 575 C410 578 410 579 380 578 C350 577 348 578 320 572 C292 566 294 566 270 555 C246 544 246 545 225 530 C204 515 203 515 185 495 C167 475 169 473 155 450 C141 427 143 428 130 405 C117 382 114 381 105 360 C96 339 95 340 95 320 C95 300 95 299 105 280 C115 261 117 261 135 245 C153 229 155 230 175 215 C195 200 194 200 215 185 C236 170 239 169 260 155 C281 141 277 140 300 130 C323 120 325 120 350 115 C375 110 375 109 400 112 C425 115 425 116 450 125 C475 134 477 140 500 148 C523 156 521 156 540 158 C559 160 555 158 575 155Z"/></clipPath>
<g filter="url(#b1)"><path id="c3body" d="M575 155 C595 152 596 151 620 145 C644 139 642 135 670 130 C698 125 700 124 730 125 C760 126 760 126 790 135 C820 144 822 146 850 160 C878 174 875 174 900 190 C925 206 927 207 950 225 C973 243 974 242 990 260 C1006 278 1006 277 1015 295 C1024 313 1025 311 1025 330 C1025 349 1024 350 1015 370 C1006 390 1003 390 990 410 C977 430 976 430 965 450 C954 470 955 470 945 490 C935 510 939 512 925 530 C911 548 911 548 890 560 C869 572 868 573 840 578 C812 583 810 582 780 580 C750 578 748 577 720 572 C692 567 695 565 670 560 C645 555 648 553 620 552 C592 551 590 552 560 555 C530 558 530 560 500 565 C470 570 470 572 440 575 C410 578 410 579 380 578 C350 577 348 578 320 572 C292 566 294 566 270 555 C246 544 246 545 225 530 C204 515 203 515 185 495 C167 475 169 473 155 450 C141 427 143 428 130 405 C117 382 114 381 105 360 C96 339 95 340 95 320 C95 300 95 299 105 280 C115 261 117 261 135 245 C153 229 155 230 175 215 C195 200 194 200 215 185 C236 170 239 169 260 155 C281 141 277 140 300 130 C323 120 325 120 350 115 C375 110 375 109 400 112 C425 115 425 116 450 125 C475 134 477 140 500 148 C523 156 521 156 540 158 C559 160 555 158 575 155Z" fill="#565656"/></g>
<g clip-path="url(#cp3)">
<path d="M575 155 C595 152 596 151 620 145 C644 139 642 135 670 130 C698 125 700 124 730 125 C760 126 760 126 790 135 C820 144 822 146 850 160 C878 174 875 174 900 190 C925 206 927 207 950 225 C973 243 974 242 990 260 C1006 278 1006 277 1015 295 C1024 313 1025 311 1025 330 C1025 349 1024 350 1015 370 C1006 390 1003 390 990 410 C977 430 976 430 965 450 C954 470 955 470 945 490 C935 510 939 512 925 530 C911 548 911 548 890 560 C869 572 868 573 840 578 C812 583 810 582 780 580 C750 578 748 577 720 572 C692 567 695 565 670 560 C645 555 648 553 620 552 C592 551 590 552 560 555 C530 558 530 560 500 565 C470 570 470 572 440 575 C410 578 410 579 380 578 C350 577 348 578 320 572 C292 566 294 566 270 555 C246 544 246 545 225 530 C204 515 203 515 185 495 C167 475 169 473 155 450 C141 427 143 428 130 405 C117 382 114 381 105 360 C96 339 95 340 95 320 C95 300 95 299 105 280 C115 261 117 261 135 245 C153 229 155 230 175 215 C195 200 194 200 215 185 C236 170 239 169 260 155 C281 141 277 140 300 130 C323 120 325 120 350 115 C375 110 375 109 400 112 C425 115 425 116 450 125 C475 134 477 140 500 148 C523 156 521 156 540 158 C559 160 555 158 575 155Z" fill="none" stroke="#7c7c7c" stroke-width="12" filter="url(#b2)" opacity=".85"/>
<path d="M575 185 C540 184 536 181 500 180 C464 179 465 174 430 180 C395 186 390 190 360 205 C330 220 335 224 310 240 C285 256 290 269 260 270 C230 271 219 242 190 245 C161 248 159 259 145 280 C131 301 134 302 135 330 C136 358 139 362 150 390 C161 418 164 415 180 440 C196 465 195 469 215 490 C235 511 234 510 260 525 C286 540 285 540 320 548 C355 556 360 555 400 555 C440 555 440 553 480 548 C520 543 520 538 560 535 C600 532 600 532 640 535 C680 538 680 543 720 548 C760 553 765 557 800 555 C835 553 834 553 860 540 C886 527 886 525 905 505 C924 485 921 484 935 460 C949 436 950 438 960 410 C970 382 974 379 975 350 C976 321 978 315 965 295 C952 275 949 273 925 270 C901 267 896 289 870 285 C844 281 848 271 820 255 C792 239 790 235 760 220 C730 205 730 204 700 195 C670 186 671 188 640 185 C609 182 610 186 575 185Z" fill="#808080" filter="url(#b2)"/>
<g filter="url(#b2)">
<ellipse cx="188" cy="302" rx="36" ry="50" fill="#a0a0a0"/>
<ellipse cx="922" cy="324" rx="40" ry="46" fill="#a0a0a0"/>
<path d="M320 218 L410 178 L432 202 L345 248Z" fill="#929292"/>
<path d="M690 205 L790 215 L825 262 L740 240Z" fill="#8a8a8a"/>
</g>
<g filter="url(#b2)" fill="#8a8a8a" stroke="#8a8a8a" stroke-width="18" stroke-linejoin="round" opacity=".85">
<path d="M310 290 C323 276 322 276 340 265 C358 254 357 253 380 248 C403 243 407 243 430 245 C453 247 456 245 470 255 C484 265 479 269 485 285 C491 301 489 305 495 320 C501 335 507 331 510 345 C513 359 509 359 505 375 C501 391 499 391 495 410 C491 429 496 435 490 450 C484 465 485 460 470 470 C455 480 451 482 430 488 C409 494 406 495 385 492 C364 489 363 487 345 475 C327 463 328 463 315 445 C302 427 303 426 295 405 C287 384 286 381 285 360 C284 339 284 338 290 320 C296 302 297 304 310 290Z"/>
<path d="M650 265 C658 252 662 253 680 248 C698 243 700 241 720 245 C740 249 742 252 760 265 C778 278 777 277 790 295 C803 313 804 315 810 335 C816 355 818 355 815 375 C812 395 811 396 800 415 C789 434 788 436 770 450 C752 464 750 464 730 470 C710 476 710 476 690 475 C670 474 669 474 650 465 C631 456 629 454 615 440 C601 426 596 421 595 410 C594 399 599 401 610 395 C621 389 630 398 640 385 C650 372 648 366 650 345 C652 324 648 320 648 300 C648 280 642 278 650 265Z"/>
</g>
</g>
<g filter="url(#b1)"><path d="M485 260 C491 239 496 244 520 235 C544 226 550 224 580 225 C610 226 622 229 640 240 C658 251 649 244 652 270 C655 296 653 316 650 345 C647 374 653 371 640 385 C627 399 616 403 600 400 C584 397 589 384 575 375 C561 366 561 369 545 365 C529 361 523 371 510 360 C497 349 501 345 495 320 C489 295 479 281 485 260Z" fill="#8e8e8e" stroke="#8e8e8e" stroke-width="8" stroke-linejoin="round"/><path d="M430 215 L480 245 L640 240 L700 215 L640 175 L500 180Z" fill="#808080"/></g>
<use href="#c3body" filter="url(#nz)" opacity="0.16"/>
<use href="#c3body" filter="url(#nzd)" opacity="0.3"/>
<g filter="url(#b1)" fill="#000">
<path d="M310 290 C323 276 322 276 340 265 C358 254 357 253 380 248 C403 243 407 243 430 245 C453 247 456 245 470 255 C484 265 479 269 485 285 C491 301 489 305 495 320 C501 335 507 331 510 345 C513 359 509 359 505 375 C501 391 499 391 495 410 C491 429 496 435 490 450 C484 465 485 460 470 470 C455 480 451 482 430 488 C409 494 406 495 385 492 C364 489 363 487 345 475 C327 463 328 463 315 445 C302 427 303 426 295 405 C287 384 286 381 285 360 C284 339 284 338 290 320 C296 302 297 304 310 290Z"/>
<path d="M650 265 C658 252 662 253 680 248 C698 243 700 241 720 245 C740 249 742 252 760 265 C778 278 777 277 790 295 C803 313 804 315 810 335 C816 355 818 355 815 375 C812 395 811 396 800 415 C789 434 788 436 770 450 C752 464 750 464 730 470 C710 476 710 476 690 475 C670 474 669 474 650 465 C631 456 629 454 615 440 C601 426 596 421 595 410 C594 399 599 401 610 395 C621 389 630 398 640 385 C650 372 648 366 650 345 C652 324 648 320 648 300 C648 280 642 278 650 265Z"/>
<circle cx="548" cy="322" r="22"/>
</g>
<g filter="url(#b1)" fill="none" stroke="#8a8a8a" stroke-linecap="round"><circle cx="455" cy="378" r="6" fill="#555"/><circle cx="470" cy="355" r="3" fill="#555"/><path d="M560 350 H578" stroke="#ddd" stroke-width="5"/></g>
<g filter="url(#b0)" fill="none" stroke="#fff" stroke-linecap="round"><ellipse cx="473" cy="226" rx="17" ry="13" stroke-width="6" stroke="#e8e8e8" transform="rotate(-20 473 226)"/>
<ellipse cx="517" cy="213" rx="13" ry="15" stroke-width="6" stroke="#e8e8e8"/>
<path d="M545 200 L548 228" stroke-width="6" stroke="#e0e0e0"/>
<ellipse cx="607" cy="203" rx="12" ry="16" stroke-width="6" stroke="#e8e8e8"/>
<ellipse cx="637" cy="227" rx="12" ry="15" stroke-width="6" stroke="#e8e8e8" transform="rotate(20 637 227)"/>
<path d="M440 215 L452 230 M670 215 L690 222" stroke-width="6" stroke="#ccc"/>
<path d="M518 372 L562 372 L568 430 L512 430Z" fill="#cfcfcf" stroke="#f0f0f0" stroke-width="10" stroke-linejoin="round"/>
<circle cx="540" cy="447" r="17" fill="#b4b4b4" stroke="#f6f6f6" stroke-width="10"/>
<path d="M506 462 L540 497 L576 462" stroke-width="10" stroke-linejoin="round"/>
<path d="M540 480 L540 498" stroke-width="8"/>
<circle cx="205" cy="363" r="9" stroke-width="7"/>
<path d="M215 376 Q235 450 285 515 L348 538" stroke-width="8"/>
<circle cx="285" cy="520" r="8" stroke-width="6"/>
<circle cx="350" cy="540" r="5" stroke-width="6"/>
<path d="M275 345 L272 385" stroke-width="10" stroke="#e8e8e8"/>
<path d="M292 428 L306 452" stroke-width="10" stroke="#e8e8e8"/>
<path d="M378 502 Q420 498 455 483" stroke-width="8" stroke="#eee"/>
<path d="M305 290 Q330 270 350 262" stroke-width="6" stroke="#ccc"/>
<circle cx="896" cy="399" r="9" stroke-width="7"/>
<path d="M882 410 Q850 465 822 508 L730 540" stroke-width="7"/>
<path d="M822 505 L828 530" stroke-width="8"/>
<path d="M822 395 Q810 420 790 442" stroke-width="9" stroke="#e0e0e0"/>
<path d="M812 318 L830 352" stroke-width="6" stroke="#bbb"/></g>
</g>
</svg>
<!-- /CT3 -->
<!-- CT4 -->
<svg class="abs ct" style="left:970px;top:430px" width="280" height="170" viewBox="0 0 1132 687">
<g id="ct4g">
<clipPath id="cp4"><path d="M130 240 C146 227 145 223 170 210 C195 197 197 197 230 190 C263 183 265 184 300 183 C335 182 340 181 370 185 C400 189 403 191 420 200 C437 209 428 222 437 222 C446 222 439 209 455 200 C471 191 474 191 500 187 C526 183 530 183 560 185 C590 187 596 187 620 195 C644 203 638 204 655 215 C672 226 674 238 688 238 C702 238 687 222 710 215 C733 208 745 210 780 210 C815 210 815 209 850 215 C885 221 887 224 920 235 C953 246 955 247 980 260 C1005 273 1007 267 1020 285 C1033 303 1029 306 1030 330 C1031 354 1031 355 1025 380 C1019 405 1016 405 1005 430 C994 455 994 457 980 480 C966 503 968 504 950 520 C932 536 933 537 910 545 C887 553 888 550 860 550 C832 550 828 549 800 545 C772 541 770 541 750 535 C730 529 745 524 720 520 C695 516 690 518 650 518 C610 518 603 519 560 520 C517 521 520 520 480 522 C440 524 438 525 400 528 C362 531 365 533 330 535 C295 537 290 539 260 535 C230 531 233 531 210 520 C187 509 189 508 170 490 C151 472 151 473 135 450 C119 427 118 424 105 400 C92 376 92 375 85 355 C78 335 77 338 78 320 C79 302 81 300 88 285 C95 270 94 271 105 260 C116 249 114 253 130 240Z"/></clipPath>
<g filter="url(#b1)"><path id="c4body" d="M130 240 C146 227 145 223 170 210 C195 197 197 197 230 190 C263 183 265 184 300 183 C335 182 340 181 370 185 C400 189 403 191 420 200 C437 209 428 222 437 222 C446 222 439 209 455 200 C471 191 474 191 500 187 C526 183 530 183 560 185 C590 187 596 187 620 195 C644 203 638 204 655 215 C672 226 674 238 688 238 C702 238 687 222 710 215 C733 208 745 210 780 210 C815 210 815 209 850 215 C885 221 887 224 920 235 C953 246 955 247 980 260 C1005 273 1007 267 1020 285 C1033 303 1029 306 1030 330 C1031 354 1031 355 1025 380 C1019 405 1016 405 1005 430 C994 455 994 457 980 480 C966 503 968 504 950 520 C932 536 933 537 910 545 C887 553 888 550 860 550 C832 550 828 549 800 545 C772 541 770 541 750 535 C730 529 745 524 720 520 C695 516 690 518 650 518 C610 518 603 519 560 520 C517 521 520 520 480 522 C440 524 438 525 400 528 C362 531 365 533 330 535 C295 537 290 539 260 535 C230 531 233 531 210 520 C187 509 189 508 170 490 C151 472 151 473 135 450 C119 427 118 424 105 400 C92 376 92 375 85 355 C78 335 77 338 78 320 C79 302 81 300 88 285 C95 270 94 271 105 260 C116 249 114 253 130 240Z" fill="#616161"/></g>
<g clip-path="url(#cp4)">
<path d="M130 240 C146 227 145 223 170 210 C195 197 197 197 230 190 C263 183 265 184 300 183 C335 182 340 181 370 185 C400 189 403 191 420 200 C437 209 428 222 437 222 C446 222 439 209 455 200 C471 191 474 191 500 187 C526 183 530 183 560 185 C590 187 596 187 620 195 C644 203 638 204 655 215 C672 226 674 238 688 238 C702 238 687 222 710 215 C733 208 745 210 780 210 C815 210 815 209 850 215 C885 221 887 224 920 235 C953 246 955 247 980 260 C1005 273 1007 267 1020 285 C1033 303 1029 306 1030 330 C1031 354 1031 355 1025 380 C1019 405 1016 405 1005 430 C994 455 994 457 980 480 C966 503 968 504 950 520 C932 536 933 537 910 545 C887 553 888 550 860 550 C832 550 828 549 800 545 C772 541 770 541 750 535 C730 529 745 524 720 520 C695 516 690 518 650 518 C610 518 603 519 560 520 C517 521 520 520 480 522 C440 524 438 525 400 528 C362 531 365 533 330 535 C295 537 290 539 260 535 C230 531 233 531 210 520 C187 509 189 508 170 490 C151 472 151 473 135 450 C119 427 118 424 105 400 C92 376 92 375 85 355 C78 335 77 338 78 320 C79 302 81 300 88 285 C95 270 94 271 105 260 C116 249 114 253 130 240Z" fill="none" stroke="#7c7c7c" stroke-width="12" filter="url(#b2)" opacity=".85"/>
<g filter="url(#b2)">
<ellipse cx="175" cy="290" rx="36" ry="34" fill="#8e8e8e"/>
<ellipse cx="322" cy="245" rx="44" ry="28" fill="#8c8c8c"/>
<ellipse cx="148" cy="390" rx="24" ry="42" fill="#888"/>
<ellipse cx="250" cy="300" rx="22" ry="30" fill="#808080"/>
<ellipse cx="800" cy="282" rx="58" ry="34" fill="#8c8c8c"/>
<ellipse cx="945" cy="315" rx="40" ry="26" fill="#8e8e8e"/>
<ellipse cx="978" cy="400" rx="20" ry="42" fill="#888"/>
<ellipse cx="480" cy="235" rx="34" ry="22" fill="#8a8a8a"/>
<ellipse cx="640" cy="248" rx="30" ry="24" fill="#8a8a8a"/>
<ellipse cx="520" cy="222" rx="16" ry="12" fill="#999"/>
<ellipse cx="612" cy="225" rx="14" ry="12" fill="#999"/>
<ellipse cx="450" cy="280" rx="25" ry="30" fill="#858585"/>
<ellipse cx="670" cy="290" rx="25" ry="30" fill="#858585"/>
<ellipse cx="420" cy="420" rx="30" ry="25" fill="#808080"/>
<ellipse cx="880" cy="320" rx="30" ry="18" fill="#858585"/>
</g><g filter="url(#b3)">
<path d="M300 320 L345 330 L420 335 L410 420 L330 445 L290 400Z" fill="#3c3c3c" opacity=".85"/>
<path d="M690 335 L735 350 L780 440 L720 420 L690 380Z" fill="#454545" opacity=".8"/>
<path d="M230 470 L560 440 L860 490 L760 520 L300 525Z" fill="#7c7c7c" opacity=".8"/>
<path d="M560 270 L640 330 L600 420 L500 420 L470 330Z" fill="#7a7a7a" opacity=".7"/>
</g>
</g>
<use href="#c4body" filter="url(#nz)" opacity="0.07"/>
<use href="#c4body" filter="url(#nzd)" opacity="0.16"/>
<g filter="url(#b1)" fill="#000">
<circle cx="563" cy="237" r="21"/><circle cx="556" cy="268" r="5"/>
</g>
<g filter="url(#b0)" fill="none" stroke="#fff" stroke-linecap="round"><path d="M560 285 L592 310 L560 335 L528 310Z" fill="#c4c4c4" stroke="#eee" stroke-width="7" stroke-linejoin="round"/>
<path d="M508 345 L550 398 L602 345" stroke-width="11" stroke-linejoin="round"/>
<path d="M550 395 L550 420" stroke-width="8"/>
<path d="M430 346 L490 330" stroke-width="13" stroke="#eee"/>
<path d="M435 345 L485 333" stroke-width="4" stroke="#888"/>
<path d="M625 350 L662 360" stroke-width="10" stroke="#e0e0e0"/>
<circle cx="232" cy="350" r="27" fill="#cdcdcd" stroke="#f0f0f0" stroke-width="12"/>
<path d="M235 398 L270 412 L300 405 L325 395 L318 435 L290 420 L255 418Z" fill="#e8e8e8" stroke="#fff" stroke-width="6" stroke-linejoin="round"/>
<path d="M262 385 L285 402" stroke-width="10"/>
<path d="M372 345 L358 400" stroke-width="16"/>
<path d="M228 455 L240 482" stroke-width="14"/>
<circle cx="890" cy="395" r="50" fill="#727272" stroke="#f0f0f0" stroke-width="7"/>
<path d="M745 378 L768 440" stroke-width="17"/>
<path d="M795 388 L790 428" stroke-width="9" stroke="#ddd"/>
<path d="M870 488 L930 470" stroke-width="14" stroke="#f4f4f4"/>
<path d="M875 487 L925 472" stroke-width="4" stroke="#777"/></g>
</g>
</svg>
<!-- /CT4 -->
<div id="bot" class="abs"></div>
</body>
</html>
